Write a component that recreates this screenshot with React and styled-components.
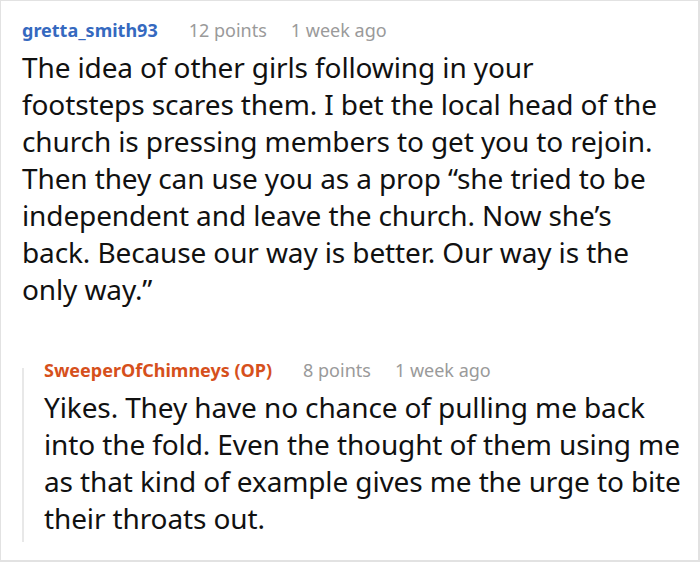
import React from "react";
import styled, { createGlobalStyle } from "styled-components";

const GlobalStyle = createGlobalStyle`
  html, body {
    margin: 0;
    padding: 0;
    background: #fff;
  }
  body {
    font-family: "Noto Sans", "Open Sans", sans-serif;
  }
`;

const Frame = styled.div`
  box-sizing: border-box;
  width: 700px;
  height: 562px;
  border: 1px solid #e2e2e2;
  border-bottom-width: 2px;
  border-right-width: 2px;
  padding: 14px 0 0 21px;
  overflow: hidden;
`;

const Comment = styled.div`
  display: flex;
  flex-direction: column;
`;

const Meta = styled.div`
  display: flex;
  align-items: baseline;
  font-size: 18px;
  line-height: 30px;
  white-space: nowrap;
  margin-top: ${(p) => p.lift || 0}px;
`;

const User = styled.span`
  font-weight: 700;
  color: ${(p) => p.color};
  margin-right: 31px;
`;

const Stat = styled.span`
  color: #9a9a9a;
  margin-right: ${(p) => p.gap || 20}px;
`;

const Body = styled.p`
  margin: 4px 0 0;
  font-size: 28px;
  line-height: 37px;
  letter-spacing: -0.12px;
  color: #111;
  white-space: nowrap;
`;

const Line = styled.span`
  display: block;
`;

const Reply = styled.div`
  margin-top: 60px;
  border-left: 2px solid #e8e8e8;
  padding: 0 0 5px 20px;
  display: flex;
  flex-direction: column;
`;

const mainLines = [
  "The idea of other girls following in your",
  "footsteps scares them. I bet the local head of the",
  "church is pressing members to get you to rejoin.",
  "Then they can use you as a prop “she tried to be",
  "independent and leave the church. Now she’s",
  "back. Because our way is better. Our way is the",
  "only way.”",
];

const replyLines = [
  "Yikes. They have no chance of pulling me back",
  "into the fold. Even the thought of them using me",
  "as that kind of example gives me the urge to bite",
  "their throats out.",
];

function App() {
  return (
    <>
      <GlobalStyle />
      <Frame>
        <Comment>
          <Meta>
            <User color="#3569bf">gretta_smith93</User>
            <Stat gap={24}>12 points</Stat>
            <Stat>1 week ago</Stat>
          </Meta>
          <Body>
            {mainLines.map((l) => (
              <Line key={l}>{l}</Line>
            ))}
          </Body>
        </Comment>
        <Reply>
          <Meta lift={-13}>
            <User color="#d6501c">SweeperOfChimneys (OP)</User>
            <Stat gap={24}>8 points</Stat>
            <Stat>1 week ago</Stat>
          </Meta>
          <Body>
            {replyLines.map((l) => (
              <Line key={l}>{l}</Line>
            ))}
          </Body>
        </Reply>
      </Frame>
    </>
  );
}

export default App;
